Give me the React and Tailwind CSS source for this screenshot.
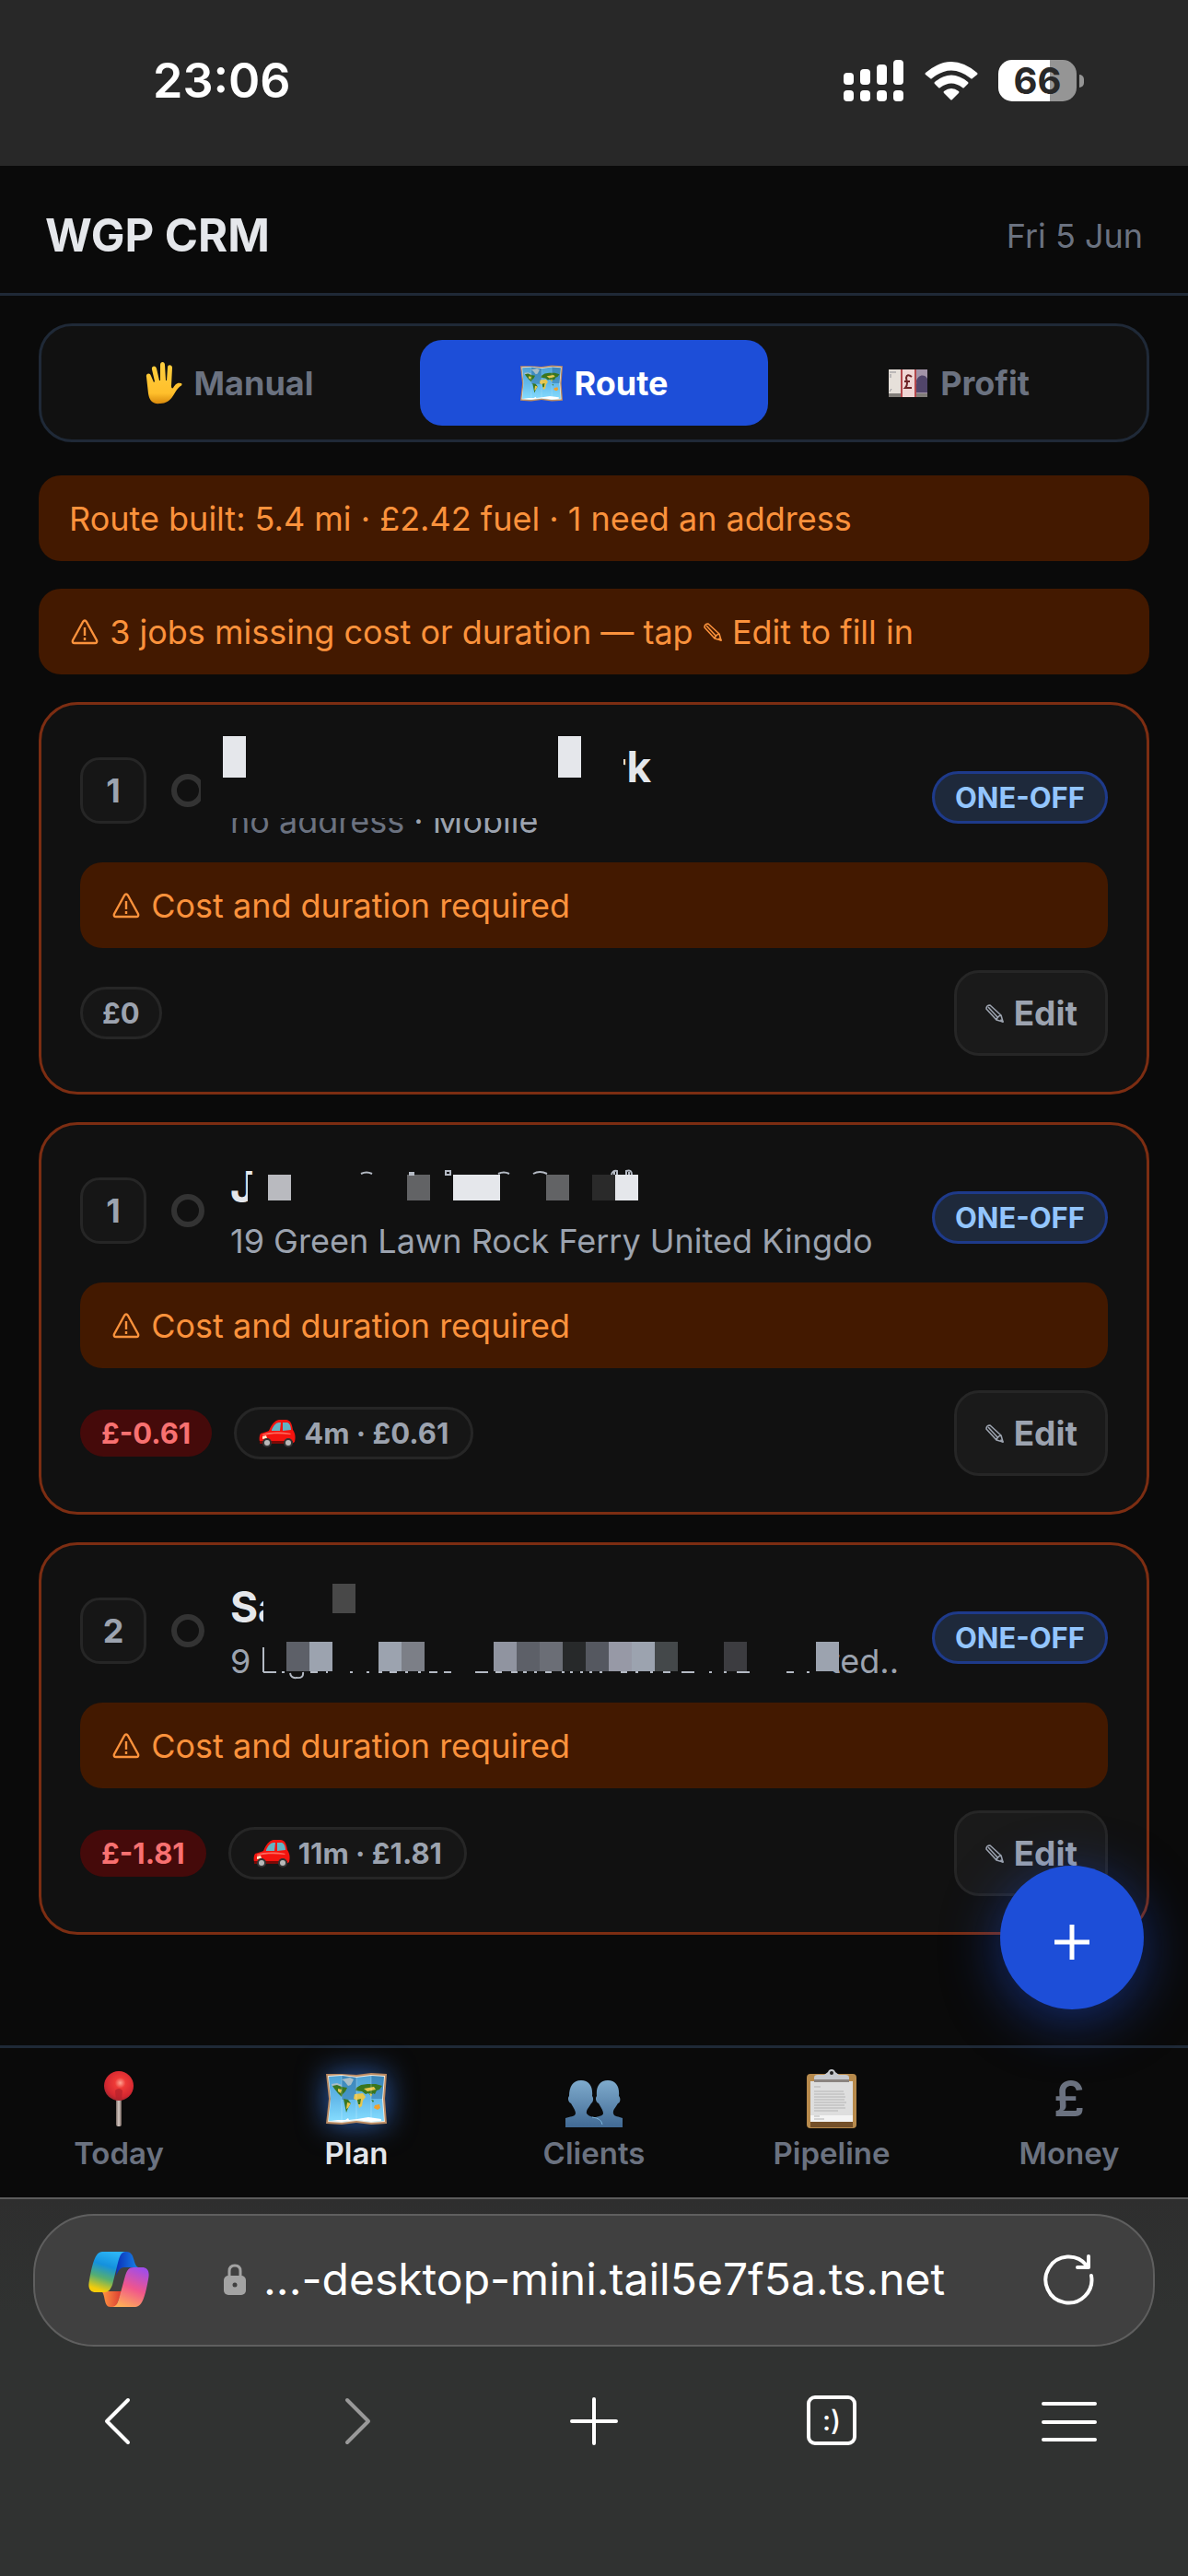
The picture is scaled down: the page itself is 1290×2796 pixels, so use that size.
import { useState } from "react";

const tabs = [
  { id: "manual", label: "Manual", Icon: HandIcon },
  { id: "route", label: "Route", Icon: MapIcon },
  { id: "profit", label: "Profit", Icon: NoteIcon },
];

const navItems = [
  { id: "today", label: "Today", icon: <PinIcon /> },
  { id: "plan", label: "Plan", icon: <MapIcon className="w-[66px] h-[56px] drop-shadow-[0_0_16px_rgba(59,130,246,0.7)]" /> },
  { id: "clients", label: "Clients", icon: <PeopleIcon /> },
  { id: "pipeline", label: "Pipeline", icon: <ClipboardIcon /> },
  { id: "money", label: "Money", icon: <span className="text-[54px] leading-[60px] font-semibold">£</span> },
];

// blocks are [x, y, width, height, fill], measured from the corner of the name block
const jobs = [
  {
    id: "job-a",
    order: 1,
    name: <span className="pl-[411px]">rk</span>,
    address: (
      <>
        <span className="text-[#6b7280]">no address</span> · Mobile
      </>
    ),
    profit: "£0",
    loss: false,
    blocks: [
      [-32, -12, 459, 96, "#111111"],
      [-8, -5, 25, 45, "#e5e7eb"],
      [356, -5, 25, 45, "#e5e7eb"],
    ],
    marks: "",
  },
  {
    id: "job-b",
    order: 1,
    name: "J",
    address: "19 Green Lawn Rock Ferry United Kingdo",
    profit: "£-0.61",
    loss: true,
    travel: "4m · £0.61",
    blocks: [
      [19, 15, 428, 34, "#111111"],
      [41, 15, 25, 28, "#b9babf"],
      [192, 15, 25, 28, "#626365"],
      [242, 15, 51, 28, "#e5e7eb"],
      [343, 15, 25, 28, "#626365"],
      [393, 15, 25, 28, "#2a2a2a"],
      [418, 15, 25, 28, "#e5e7eb"],
    ],
    marks: "M142 14q6-3 12 0M195 13h4v2h-4zM234 11h5v4h-5zM291 14q6-3 12 0M329 14q7-4 15 0M414 15q1-5 6-4v4M417 15v-3M430 15v-4q6-2 6 4M433 15v-3",
  },
  {
    id: "job-c",
    order: 2,
    name: "Sa",
    address: (
      <span className="flex justify-between w-[726px]">
        <span>9</span>
        <span>ted..</span>
      </span>
    ),
    profit: "£-1.81",
    loss: true,
    travel: "11m · £1.81",
    blocks: [
      [36, 0, 440, 58, "#111111"],
      [111, 3, 25, 32, "#484848"],
      [61, 66, 25, 32, "#5d6068"],
      [86, 66, 25, 32, "#9ca3af"],
      [161, 66, 25, 32, "#9ca3af"],
      [186, 66, 25, 32, "#7c7f87"],
      [286, 66, 25, 32, "#9094a0"],
      [311, 66, 25, 32, "#5d6068"],
      [336, 66, 25, 32, "#6b6e76"],
      [361, 66, 25, 32, "#27292a"],
      [386, 66, 25, 32, "#555860"],
      [411, 66, 25, 32, "#9799a6"],
      [436, 66, 25, 32, "#9ca3af"],
      [461, 66, 25, 32, "#44484a"],
      [536, 66, 25, 32, "#3c3c40"],
      [636, 66, 25, 32, "#9ca3af"],
    ],
    marks:
      "M36 72v27M36 99h14M56 99h3M65 100q1 6 7 5q8 1 7-6M87 99h8M104 99h2M130 99h3M148 99h3M161 99h4M173 99h8M190 99h3M204 99h3M216 99h9M232 99h8M266 99h14M288 99h7M305 99h7M318 99h4M330 99h3M342 99h7M360 99h3M369 99h3M380 99h3M390 99h3M401 99h3M424 99h7M440 99h3M456 99h3M470 99h8M490 99h14M520 99h3M536 99h3M550 99h14M604 99h8M626 99h3",
  },
];

function HandIcon() {
  return (
    <svg viewBox="0 0 40 46" className="w-[40px] h-[46px]" aria-hidden="true">
      <defs>
        <linearGradient id="hand" x1="0" y1="0" x2="0" y2="1">
          <stop offset="0" stopColor="#ffcf3f" />
          <stop offset="0.75" stopColor="#ffbf2b" />
          <stop offset="1" stopColor="#d98a0c" />
        </linearGradient>
      </defs>
      <path
        fill="url(#hand)"
        d="M1 16c-1-4 4-5 5-1l3 7 1-1L7 8c-1-4 4-5 5-1l3 13h1V3c0-4 5-4 5 0l1 17h1l1-14c0-4 5-3 5 0l-1 20c0 2 1 3 2 2 2-3 4-6 8-5 2 0 2 2 0 3-5 4-6 8-9 12-3 4-7 7-13 7C7 46 4 41 3 34z"
      />
    </svg>
  );
}

function MapIcon({ className = "w-[46px] h-[40px]" }) {
  return (
    <svg viewBox="0 0 66 56" className={className} aria-hidden="true">
      <defs>
        <linearGradient id="sea" x1="0" y1="0" x2="0" y2="1">
          <stop offset="0" stopColor="#4fa3d6" />
          <stop offset="0.5" stopColor="#63b9ea" />
          <stop offset="1" stopColor="#86ddff" />
        </linearGradient>
      </defs>
      <path fill="#b98a62" d="M0 1l17 0 16 1 16-2 17 1-2 27 2 27-17 1-16-2-16 2-17-1 3-27z" />
      <path fill="#f3ece0" d="M2 3l15-1 16 2 16-2 15 1-2 25 2 25-15 1-16-2-16 2-15-1 3-25z" />
      <path fill="url(#sea)" d="M3 4l14-1 16 2 16-2 14 1-2 24 2 24-14 1-16-2-16 2-14-1 2-24z" />
      <path fill="#1e5f93" opacity="0.4" d="M17 3l16 2v24H17zM49 3l14 1-2 24H49z" />
      <path fill="#a9bdc6" d="M17 7l9-2 4 2-3 6-3 1-4-5zM6 12l6-1 5 2-1 2-9 0z" />
      <path fill="#39761f" d="M7 14l5-1 5 2 6 1-2 4-3 3-1 3-4-4-4-5zM19 28l5 1 3 4-3 5-2 5-1-5zM33 16l5-3 7-1 9 0 7 2-3 4-3 1-2 4-2-1-2 3-3-3-3 1-4-3-7-1z" />
      <path fill="#e7c64e" d="M13 17l4 1-1 4-3-2zM23 32l4 1-3 5-2 1zM31 23l9-1 3 4-3 4-1 6-3 2-2-8-4-2zM41 17l11-2 2 3-9 2zM47 22l3 1-1 3z" />
      <path fill="#39761f" d="M34 29l4-1-1 6-2 0zM49 29l3 1-1 2z" />
      <path fill="#f0a02c" d="M53 35l5-1 1 4-3 2-4-2z" />
      <path fill="#fff" d="M5 52l8-1 8 0 3-2 1 2 9-1 12-2 14 2v2l-11 1-16-2-16 2-14-1z" />
      <path stroke="#fff" strokeOpacity="0.25" fill="none" d="M33 5v46M17 3v50M49 3v49" />
    </svg>
  );
}

function NoteIcon() {
  return (
    <svg viewBox="0 0 44 30" className="w-[44px] h-[30px]" aria-hidden="true">
      <path fill="#817d79" d="M1 3h42v27H1z" />
      <path fill="#e6e0da" d="M1 0h19v26H1z" />
      <path fill="#a293a8" d="M20 0h23v26H20z" />
      <path fill="#51456a" d="M31 25c-2-6 1-8 0-12 1-7 9-9 12-3v15z" />
      <path stroke="#8f8f95" fill="none" d="M2 3h7M2 24l2-3M3 5v4" />
      <path fill="#efd5d4" d="M15 0h14v30H15z" />
      <path fill="#b3474c" d="M14 0h2v30h-2zM29 0h2v30h-2z" />
      <path stroke="#6d2327" strokeWidth="2" fill="none" d="M26 8q-5-4-6 1l1 6q0 3-2 5h7M18 13h6" />
    </svg>
  );
}

function CarIcon() {
  return (
    <svg viewBox="0 0 40 30" className="w-[40px] h-[30px]" aria-hidden="true">
      <path fill="#f3140f" d="M2 15c3-1 7-2 9-3C14 5 17 1 22 0h8c5 1 6 5 7 11 3 4 3 9 2 13l-3 2H3c-3-1-3-8-1-11z" />
      <path fill="#63b4c4" d="M14 11c2-5 5-8 8-8h2l-1 9h-9zM26 3h5c3 1 4 5 4 8l-9 1z" />
      <path fill="#ff6a5d" d="M4 16c8-3 19-3 31-1l-1 1c-11-1-20-1-30 1z" />
      <path fill="#ffe9c9" d="M4 18l4-1 1 3-5 1z" />
      <path fill="#7c0906" d="M1 23h36v3H1z" />
      <circle cx="9" cy="25" r="5" fill="#343434" />
      <circle cx="9" cy="25" r="3" fill="#b9b9b9" />
      <circle cx="32" cy="25" r="5" fill="#343434" />
      <circle cx="32" cy="25" r="3" fill="#b9b9b9" />
    </svg>
  );
}

function PinIcon() {
  return (
    <svg viewBox="0 0 34 62" className="w-[34px] h-[62px]" aria-hidden="true">
      <defs>
        <radialGradient id="pinHead" cx="0.55" cy="0.4" r="0.6">
          <stop offset="0" stopColor="#ffa391" />
          <stop offset="0.3" stopColor="#ee3a37" />
          <stop offset="0.8" stopColor="#d42730" />
          <stop offset="1" stopColor="#a8262f" />
        </radialGradient>
        <linearGradient id="pinRod">
          <stop offset="0" stopColor="#7a6c66" />
          <stop offset="0.5" stopColor="#d8cbc5" />
          <stop offset="1" stopColor="#6b5c56" />
        </linearGradient>
      </defs>
      <rect x="14" y="28" width="6" height="33" rx="2" fill="url(#pinRod)" />
      <circle cx="17" cy="17" r="16" fill="url(#pinHead)" />
      <path fill="#b3212b" opacity="0.7" d="M13 22q4-4 8 0l-1 10h-6z" />
    </svg>
  );
}

function PeopleIcon() {
  return (
    <svg viewBox="0 0 62 52" className="w-[62px] h-[52px] mt-[12px]" aria-hidden="true">
      <defs>
        <linearGradient id="people" x1="0" y1="0" x2="0" y2="1">
          <stop offset="0" stopColor="#7fabcd" />
          <stop offset="1" stopColor="#416a94" />
        </linearGradient>
      </defs>
      <path
        fill="url(#people)"
        d="M0 51V41c5-2 10-1 11-5 0-4-3-7-5-11-3-1-4-6-2-8C4 7 8 0 17 0s13 7 12 17c2 2 1 7-1 8-2 4-6 7-5 11 1 2 4 3 7 4h3c4-1 8-2 8-4 0-4-3-7-5-11-3-1-4-6-2-8C33 7 37 0 46 0s13 7 12 17c2 2 2 7-1 8-2 4-6 7-5 11 1 4 6 3 10 5v10z"
      />
      <path stroke="#7db6da" fill="none" d="M29 40q10 1 11 8" />
    </svg>
  );
}

function ClipboardIcon() {
  return (
    <svg viewBox="0 0 56 64" className="w-[56px] h-[64px]" aria-hidden="true">
      <rect x="1" y="5" width="54" height="59" rx="4" fill="#b78a4c" />
      <path fill="#74502a" d="M5 57h46v6H5z" />
      <path fill="#dedede" d="M5 13h46v44H5z" />
      <path fill="#f4f4f4" d="M5 50h46v7H5z" />
      <path stroke="#b4b4b4" strokeWidth="1" fill="none" d="M9 19h7M9 24h32M9 27h33M9 30h34M9 33h33M9 36h35M9 39h33M9 42h34M9 45h26M9 51h6M9 54h11" />
      <path fill="#8b8480" d="M9 10h38v4H9z" />
      <path fill="#c6c9ce" d="M9 11V9q0-3 4-3h7l4-3q1-3 4-3t4 3l4 3h7q4 0 4 3v2z" />
      <circle cx="28" cy="4" r="2" fill="#222" />
    </svg>
  );
}

function WarningIcon() {
  return (
    <svg viewBox="0 0 30 28" className="w-[30px] h-[28px] mx-[2px] shrink-0" fill="none" stroke="currentColor" strokeWidth="2.4" strokeLinejoin="round" aria-hidden="true">
      <path d="M13 3q2-3 4 0l11 20q1 3-2 3H4q-3 0-2-3z" />
      <path d="M15 9v9M15 20v3" />
    </svg>
  );
}

function PencilIcon() {
  return (
    <svg viewBox="0 0 22 22" className="w-[22px] h-[22px] shrink-0" fill="none" stroke="currentColor" strokeWidth="1.6" strokeLinejoin="round" aria-hidden="true">
      <path d="M2 6q0-4 4-4l12 11 2 7-7-2zM4 4l11 12M18 13q-4 1-5 5" />
      <path d="M18 18l2 2-2-1z" fill="currentColor" />
    </svg>
  );
}

function CopilotIcon() {
  return (
    <svg viewBox="0 0 66 60" className="w-[66px] h-[60px]" aria-hidden="true">
      <defs>
        <linearGradient id="cpLeft" x1="0.6" y1="0" x2="0.3" y2="1">
          <stop offset="0" stopColor="#2bb4f5" />
          <stop offset="0.35" stopColor="#1491dd" />
          <stop offset="0.65" stopColor="#55ae72" />
          <stop offset="0.95" stopColor="#f5cc0a" />
        </linearGradient>
        <linearGradient id="cpRight" x1="0.7" y1="0" x2="0.3" y2="1">
          <stop offset="0" stopColor="#a24de8" />
          <stop offset="0.5" stopColor="#f0568c" />
          <stop offset="1" stopColor="#ffae57" />
        </linearGradient>
        <linearGradient id="cpBlue">
          <stop offset="0" stopColor="#0b2fb8" />
          <stop offset="1" stopColor="#1784e8" />
        </linearGradient>
        <linearGradient id="cpOrange">
          <stop offset="0" stopColor="#ff9a42" />
          <stop offset="1" stopColor="#dc3a32" />
        </linearGradient>
      </defs>
      <path fill="url(#cpBlue)" d="M32 0h9c10 0 7 14 13 17H39c-5 0-7 5-9 9z" />
      <path fill="url(#cpOrange)" d="M14 43h22l-6 17h-6c-8 0-5-14-10-17z" />
      <path fill="url(#cpLeft)" d="M15 0h26c-6 0-7 5-9 12l-6 24c-2 5-4 8-9 8H8c-6 0-9-4-7-13C4 15 7 0 15 0z" />
      <path fill="url(#cpRight)" d="M51 60H25c6 0 7-5 9-12l6-22c2-6 4-9 9-9h9c6 0 9 4 7 13-3 16-6 30-14 30z" />
    </svg>
  );
}

function StatusBar() {
  return (
    <div className="h-[180px] bg-[#282828] text-white flex items-center justify-between pl-[166px] pr-[113px] pb-[5px]">
      <span className="text-[52px] leading-[60px] font-semibold">23:06</span>
      <div className="flex items-center gap-[22px]">
        <svg viewBox="0 0 66 46" className="w-[66px] h-[46px]" fill="#fff" aria-hidden="true">
          <rect x="0" y="14" width="11" height="13" rx="4" />
          <rect x="18" y="10" width="11" height="17" rx="4" />
          <rect x="36" y="5" width="11" height="22" rx="4" />
          <rect x="54" y="0" width="11" height="27" rx="4" />
          <rect x="0" y="33" width="11" height="12" rx="4" />
          <rect x="18" y="33" width="11" height="12" rx="4" />
          <rect x="36" y="33" width="11" height="12" rx="4" />
          <rect x="54" y="33" width="11" height="12" rx="4" />
        </svg>
        <svg viewBox="0 0 58 44" className="w-[58px] h-[44px]" fill="#fff" aria-hidden="true">
          <path d="M1 13Q29-11 57 13q1 1 0 2l-5 4q-1 1-2 0Q29 2 8 19q-1 1-2 0l-5-4q-1-1 0-2z" />
          <path d="M11 23Q29 8 47 23q1 1 0 2l-4 4q-1 1-2 0-12-9-24 0-1 1-2 0l-4-4q-1-1 0-2z" />
          <path d="M21 33q8-6 16 0 1 1 0 2l-7 7q-1 1-2 0l-7-7q-1-1 0-2z" />
        </svg>
        <div className="flex items-center gap-[3px]">
          <div className="w-[85px] h-[45px] rounded-[15px] bg-[linear-gradient(to_right,#fff_66%,#959595_66%)] text-[#282828] text-[40px] leading-[45px] font-bold text-center">
            66
          </div>
          <div className="w-[5px] h-[14px] rounded-r-full bg-[#959595]"></div>
        </div>
      </div>
    </div>
  );
}

function Notice({ children }) {
  return (
    <div className="h-[93px] px-[33px] rounded-[24px] bg-[#431900] text-[#fb923c] text-[36px] leading-[48px] flex items-center whitespace-pre">
      {children}
    </div>
  );
}

function JobCard({ job }) {
  return (
    <article className="border-[3px] border-[#7c2d12] bg-[#111111] rounded-[42px] px-[42px] py-[39px] flex flex-col gap-[24px]">
      <div className="flex items-center">
        <div className="w-[72px] h-[72px] shrink-0 rounded-[21px] border-[3px] border-[#262626] bg-[#161616] flex items-center justify-center text-[36px] font-bold text-[#9ca3af]">
          {job.order}
        </div>
        <input
          type="checkbox"
          aria-label="Mark job done"
          className="appearance-none w-[36px] h-[36px] shrink-0 ml-[27px] rounded-full border-[6px] border-[#333333] checked:bg-[#1d4ed8]"
        />
        <div className="relative flex-1 min-w-0 ml-[28px]">
          <h2 className="text-[46px] leading-[57px] font-bold text-[#e5e7eb] whitespace-nowrap">{job.name}</h2>
          <p className="mt-[9px] text-[36px] leading-[42px] text-[#9ca3af] whitespace-nowrap">{job.address}</p>
          {/* hides the client details */}
          <svg className="absolute left-0 top-0 w-[728px] h-[108px] overflow-visible" aria-hidden="true">
            {job.blocks.map(([x, y, w, h, fill]) => (
              <rect key={x + "-" + y} x={x} y={y} width={w} height={h} fill={fill} />
            ))}
            <path d={job.marks} fill="none" stroke="#b4bac4" strokeWidth="2" />
          </svg>
        </div>
        <span className="h-[57px] px-[22px] mt-[15px] shrink-0 rounded-full border-[3px] border-[#1e3a8a] bg-[#1e293b] text-[#93c5fd] text-[31px] leading-[51px] font-bold">
          ONE-OFF
        </span>
      </div>
      <Notice>
        <WarningIcon />
        <span> Cost and duration required</span>
      </Notice>
      <div className="flex items-center justify-between">
        <div className="flex items-center gap-[24px] text-[31px] leading-[51px] font-bold">
          {job.loss ? (
            <span className="px-[23px] rounded-full bg-[#450a0a] text-[#f87171]">{job.profit}</span>
          ) : (
            <span className="px-[21px] rounded-full border-[3px] border-[#262626] bg-[#161616] text-[#9ca3af]">{job.profit}</span>
          )}
          {job.travel && (
            <span className="px-[24px] rounded-full border-[3px] border-[#262626] bg-[#161616] text-[#9ca3af] flex items-center gap-[9px]">
              <CarIcon />
              {job.travel}
            </span>
          )}
        </div>
        <button className="h-[93px] px-[30px] rounded-[27px] border-[3px] border-[#262626] bg-[#1a1a1a] text-[#9ca3af] text-[37px] font-bold flex items-center gap-[10px]">
          <PencilIcon />
          Edit
        </button>
      </div>
    </article>
  );
}

function BrowserBar() {
  return (
    <div className="h-[411px] border-t-2 border-[#5c5c5c] bg-[linear-gradient(to_bottom,#2e2e2e,#303231_30%,#303231)] px-[36px] pt-[16px]">
      <div className="h-[144px] rounded-[66px] border-2 border-[#5f5f5f] bg-[#404040] flex items-center pl-[58px] pr-[64px] pb-[2px]">
        <button aria-label="Copilot">
          <CopilotIcon />
        </button>
        <svg viewBox="0 0 24 34" className="w-[24px] h-[34px] ml-[81px] shrink-0" aria-hidden="true">
          <path d="M6 16V8q0-6 6-6T18 8v8" fill="none" stroke="#a3a3a3" strokeWidth="3" />
          <rect y="13" width="24" height="21" rx="5" fill="#a3a3a3" />
          <circle cx="12" cy="23" r="2.5" fill="#404040" />
        </svg>
        <input
          type="text"
          readOnly
          aria-label="Address"
          value="...-desktop-mini.tail5e7f5a.ts.net"
          className="flex-1 min-w-0 ml-[19px] bg-transparent text-white text-[48px] leading-[60px] outline-none"
        />
        <button aria-label="Reload">
          <svg viewBox="0 0 56 56" className="w-[56px] h-[56px]" fill="none" stroke="#fff" strokeWidth="4" strokeLinecap="round" strokeLinejoin="round">
            <path d="M53 24A25 25 0 1 1 48 13M50 3v12H38" />
          </svg>
        </button>
      </div>
      <div className="-mx-[36px] mt-[53px] grid grid-cols-5 justify-items-center text-white">
        <button aria-label="Back">
          <svg viewBox="0 0 56 56" className="w-[56px] h-[56px]" fill="none" stroke="currentColor" strokeWidth="4" strokeLinecap="round" strokeLinejoin="round">
            <path d="M38 5L15 28l23 23" />
          </svg>
        </button>
        <button aria-label="Forward" className="text-[#999999]">
          <svg viewBox="0 0 56 56" className="w-[56px] h-[56px]" fill="none" stroke="currentColor" strokeWidth="4" strokeLinecap="round" strokeLinejoin="round">
            <path d="M18 5l23 23-23 23" />
          </svg>
        </button>
        <button aria-label="New tab">
          <svg viewBox="0 0 56 56" className="w-[56px] h-[56px]" fill="none" stroke="currentColor" strokeWidth="4" strokeLinecap="round">
            <path d="M28 4v48M4 28h48" />
          </svg>
        </button>
        <button aria-label="Tabs" className="w-[54px] h-[54px] rounded-[9px] border-4 border-white text-[30px] leading-[40px] font-medium">
          :)
        </button>
        <button aria-label="Menu">
          <svg viewBox="0 0 60 56" className="w-[60px] h-[56px]" fill="none" stroke="currentColor" strokeWidth="4" strokeLinecap="round">
            <path d="M2 9h56M2 29h56M2 48h56" />
          </svg>
        </button>
      </div>
    </div>
  );
}

export default function App() {
  const [tab, setTab] = useState("route");
  const [page, setPage] = useState("plan");

  return (
    <div className="min-h-screen flex flex-col bg-[#0a0a0a] font-['Inter','Liberation_Sans',sans-serif]">
      <StatusBar />
      <div className="relative flex-1 flex flex-col">
        <header className="flex items-center justify-between pl-[49px] pr-[49px] pt-[46px] pb-[32px] border-b-[3px] border-[#1f2937]">
          <h1 className="text-[49px] leading-[60px] font-bold text-[#e5e7eb]">WGP CRM</h1>
          <span className="text-[36px] leading-[48px] text-[#6b7280]">Fri 5 Jun</span>
        </header>

        <main className="flex-1 px-[42px] pt-[30px] flex flex-col gap-[30px]">
          <div className="grid grid-cols-3 gap-[18px] p-[15px] mb-[6px] rounded-[36px] border-[3px] border-[#1f2937] bg-[#111111]">
            {tabs.map(({ id, label, Icon }) => (
              <button
                key={id}
                onClick={() => setTab(id)}
                className={`h-[93px] rounded-[24px] flex items-center justify-center gap-[13px] text-[36px] font-bold ${
                  tab === id ? "bg-[#1d4ed8] text-white" : "text-[#6b7280]"
                }`}
              >
                <Icon />
                {label}
              </button>
            ))}
          </div>
          <Notice>Route built: 5.4 mi · £2.42 fuel · 1 need an address</Notice>
          <Notice>
            <WarningIcon />
            <span> 3 jobs missing cost or duration — tap </span>
            <PencilIcon />
            <span> Edit to fill in</span>
          </Notice>
          {jobs.map((job) => (
            <JobCard key={job.id} job={job} />
          ))}
        </main>

        <nav className="h-[165px] border-t-[3px] border-[#1f2937] grid grid-cols-5">
          {navItems.map((item) => (
            <button
              key={item.id}
              onClick={() => setPage(item.id)}
              className={`flex flex-col items-center pt-[21px] text-[33px] leading-[42px] font-semibold ${
                page === item.id ? "text-[#e5e7eb]" : "text-[#6b7280]"
              }`}
            >
              <span className="h-[68px] mb-[4px] flex items-center">{item.icon}</span>
              {item.label}
            </button>
          ))}
        </nav>

        <button
          aria-label="Add job"
          className="absolute right-[48px] bottom-[204px] w-[156px] h-[156px] rounded-full bg-[#1d4ed8] flex items-center justify-center pt-[10px] shadow-[0_12px_60px_rgba(29,78,216,0.5)]"
        >
          <svg viewBox="0 0 40 40" className="w-[40px] h-[40px]" stroke="#fff" strokeWidth="5" aria-hidden="true">
            <path d="M20 1v38M1 20h38" />
          </svg>
        </button>
      </div>
      <BrowserBar />
    </div>
  );
}
